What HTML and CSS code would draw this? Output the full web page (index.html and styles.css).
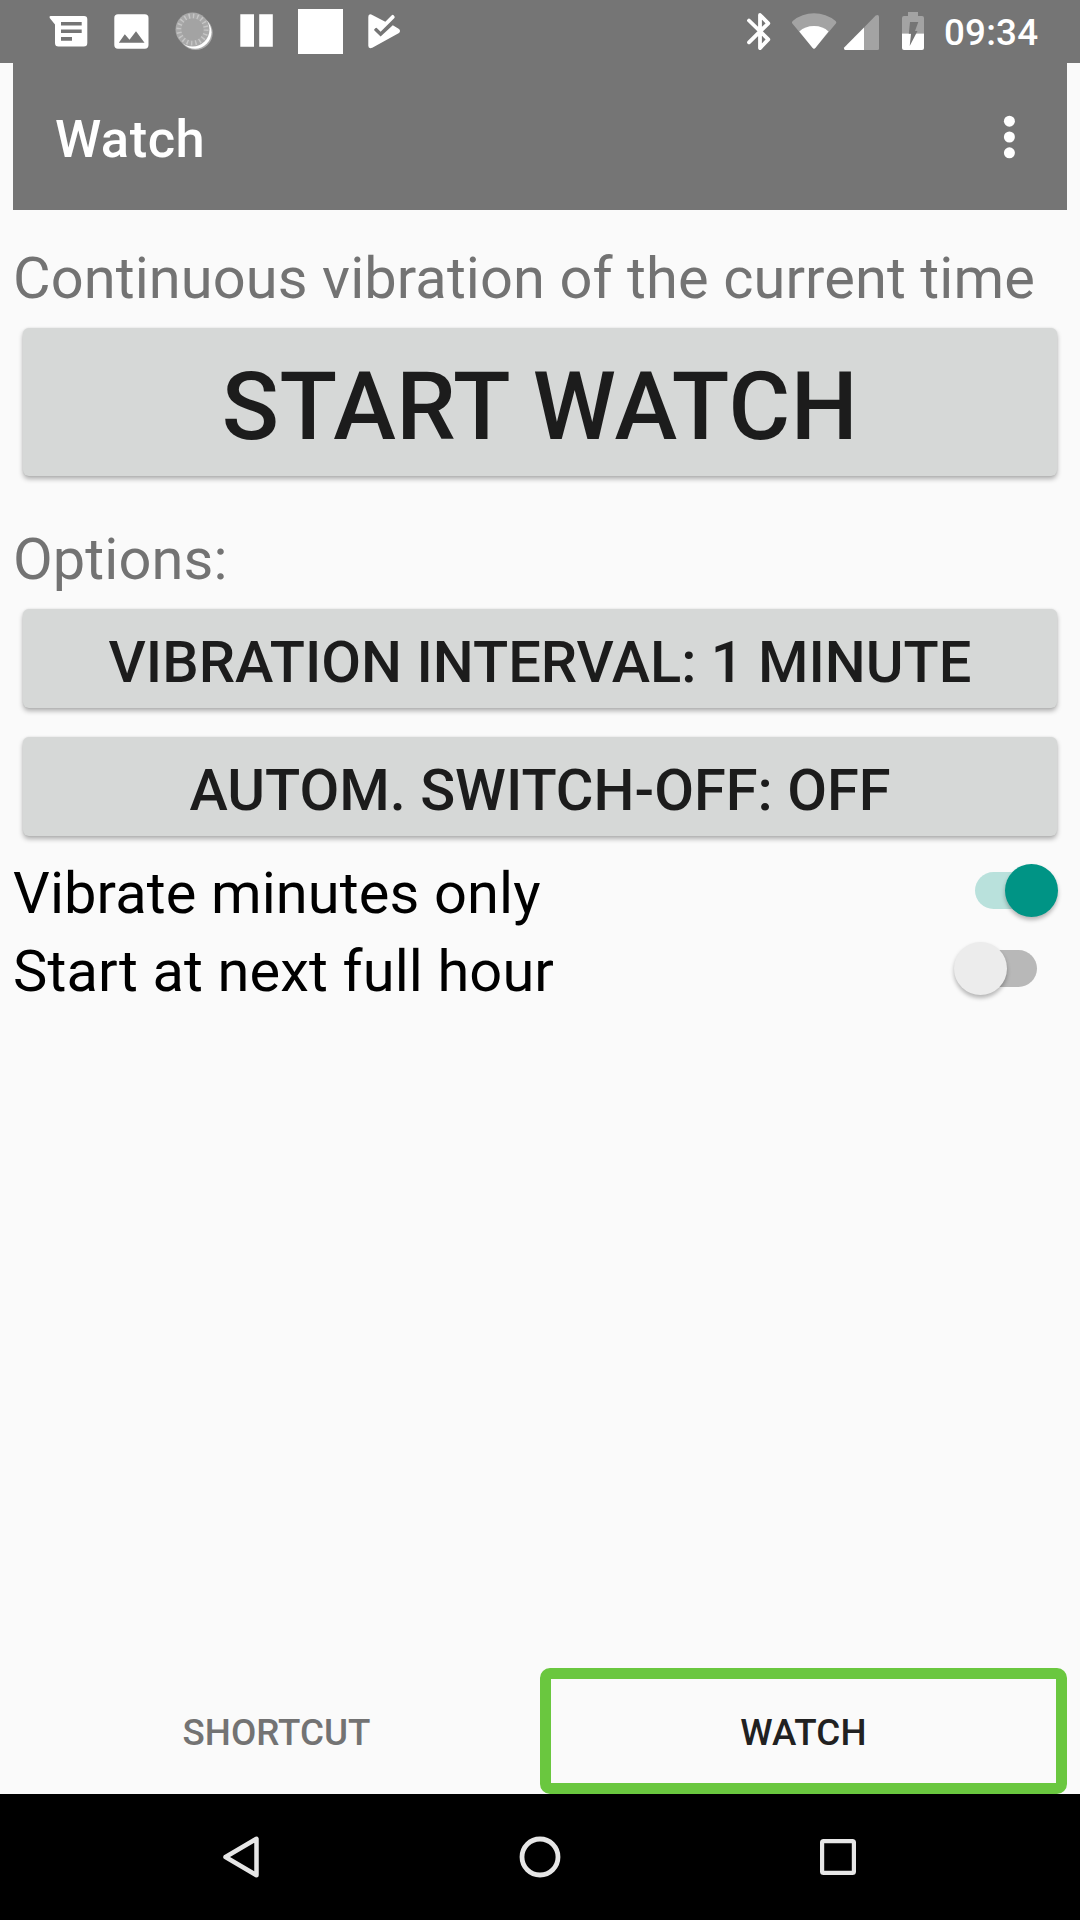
FILE: index.html
```html
<!DOCTYPE html>
<html lang="en">
<head>
<meta charset="utf-8">
<title>Watch</title>
<link rel="stylesheet" href="styles.css">
</head>
<body>
<div class="screen">
  <header class="status">
    <div class="notifications">
      <svg width="63" height="63" viewBox="37 0 63 63"><path fill="#fff" fill-rule="evenodd" d="M50.5 16H84a3.300 3.300 0 0 1 3.300 3.300V43a3.500 3.500 0 0 1-3.500 3.500H58.500A3.500 3.500 0 0 1 55 43V24.500L49.700 18Q49 16 50.500 16zM61 22v3.500h20.700V22zM61 29.500V33h20.700v-3.500zM61 37v3.700h11V37z"/></svg>
      <svg width="63" height="63" viewBox="100 0 63 63"><path fill="#fff" fill-rule="evenodd" d="M118 14.300h26.800a3.700 3.700 0 0 1 3.700 3.700v27a3.700 3.700 0 0 1-3.700 3.700H118a3.700 3.700 0 0 1-3.700-3.700V18a3.700 3.700 0 0 1 3.700-3.700zM118.800 42.800h25.700L136 31.300l-6.500 8.500-4.700-5.500z"/></svg>
      <svg width="63" height="63" viewBox="163 0 63 63"><circle cx="195.700" cy="33" r="17" fill="#aaa"/><circle cx="195" cy="32.200" r="16.500" fill="#fff"/><circle cx="192.500" cy="29.500" r="17" fill="#a9a9a9"/><circle cx="192.500" cy="29.500" r="13.500" fill="none" stroke="#c6c6c6" stroke-width="5" stroke-dasharray="1.400 2.840"/><circle cx="192.500" cy="29.500" r="11" fill="#a3a3a3"/></svg>
      <svg width="63" height="63" viewBox="226 0 63 63"><path fill="#fff" d="M240.300 14.300H254v32.400h-13.700zM259.200 14.300h13.600v32.400h-13.600z"/></svg>
      <svg width="63" height="63" viewBox="289 0 63 63"><path fill="#fff" d="M298 9h45v45h-45z"/></svg>
      <svg width="63" height="63" viewBox="352 0 63 63"><path fill="#fff" d="M368.300 17q0-3.500 3-2.500L385.300 21.800l6.500-6.500q1-1 2 .1l.6.800q.8 1-.2 2L380.600 31.700l-3.800-3.700q-.6-.6-1.200 0l-1.200 1.200q-.6.6 0 1.200l6.200 6.100 12.200-11.200 6.200 3.800q2 2 0 4L372.300 47.800q-4 1.400-4-2z"/></svg>
    </div>
    <div class="system">
      <svg width="42" height="63" viewBox="740 0 42 63"><path fill="none" stroke="#fff" stroke-width="3.800" stroke-linejoin="round" stroke-linecap="round" d="M749 20.500l19.300 18.900-8.300 8.700V15l8.300 8.300L749 42.300"/></svg>
      <svg width="58" height="63" viewBox="782 0 58 63"><path fill="#a3a3a3" d="M792.300 23.500q-1-1.500.4-2.600Q802 13.200 814 13.200t21.600 7.700q1.400 1.100.3 2.600L815.300 48q-1.300 1.500-2.600 0z"/><path fill="#fff" d="M799.300 31.500Q805 26 814 26t14.500 5.500L815.300 48q-1.300 1.500-2.600 0z"/></svg>
      <svg width="50" height="63" viewBox="840 0 50 63"><path fill="#a3a3a3" d="M864 27.500l11.700-12q3.300-1.500 3.300 1.500v31.500q0 1.500-1.500 1.500H864z"/><path fill="#fff" d="M864 27.500V50h-19q-1.700-.8-.8-2.500z"/></svg>
      <svg width="54" height="63" viewBox="890 0 54 63"><path fill="#a3a3a3" d="M902 33.500V18q0-2 2-2h4v-4h10v4h4q2 0 2 2v15.500z"/><path fill="#fff" d="M902 33.500h22V48q0 2-2 2h-18q-2 0-2-2z"/><path fill="#757575" d="M910 22h8.300l-3.300 9h2.500L909.700 46l1.300-12.200h-2.200z"/></svg>
      <span class="clock">09:34</span>
    </div>
  </header>

  <div class="appbar">
    <h1 class="title">Watch</h1>
    <svg class="overflow" width="12" height="44" viewBox="0 0 12 44"><g fill="#fff"><circle cx="6.400" cy="6.200" r="5.500"/><circle cx="6.400" cy="22" r="5.500"/><circle cx="6.400" cy="37.800" r="5.500"/></g></svg>
  </div>

  <main class="content">
    <p class="label label-first">Continuous vibration of the current time</p>
    <button class="btn btn-large">START WATCH</button>
    <p class="label">Options:</p>
    <div class="options">
      <button class="btn">VIBRATION INTERVAL: 1 MINUTE</button>
      <button class="btn">AUTOM. SWITCH-OFF: OFF</button>
    </div>
    <div class="row"><span>Vibrate minutes only</span><span class="switch on"><span class="thumb"></span></span></div>
    <div class="row"><span>Start at next full hour</span><span class="switch"><span class="thumb"></span></span></div>
  </main>

  <div class="tabs">
    <div class="tab">SHORTCUT</div>
    <div class="tab active">WATCH</div>
  </div>

  <nav class="navbar">
    <svg width="298" height="126" viewBox="0 0 298 126"><path fill="none" stroke="#e6e6e6" stroke-width="4.500" stroke-linejoin="round" d="M132.500 63l31-18.200v36.400z"/></svg>
    <svg width="298" height="126" viewBox="0 0 298 126"><circle cx="149" cy="63" r="18" fill="none" stroke="#e6e6e6" stroke-width="4.800"/></svg>
    <svg width="298" height="126" viewBox="0 0 298 126"><rect x="133.100" y="47.100" width="31.800" height="31.800" rx="1.500" fill="none" stroke="#e6e6e6" stroke-width="4.200"/></svg>
  </nav>
</div>
</body>
</html>
```
FILE: styles.css
```css
* { box-sizing: border-box; }
body {
  margin: 0;
  background: #fafafa;
  font-family: Roboto, sans-serif;
}
svg { display: block; flex: none; }
.screen {
  display: flex;
  flex-direction: column;
  width: 1080px;
  height: 1920px;
  overflow: hidden;
}
.status {
  display: flex;
  justify-content: space-between;
  height: 63px;
  padding-left: 37px;
  background: #757575;
}
.notifications, .system { display: flex; }
.system { width: 340px; }
.clock {
  color: #fff;
  font-size: 36.75px;
  font-weight: 500;
  letter-spacing: .2px;
  line-height: 66px;
  white-space: nowrap;
}
.appbar {
  display: flex;
  align-items: center;
  justify-content: space-between;
  height: 147px;
  margin: 0 13px;
  padding: 0 52px 0 42px;
  background: #757575;
}
.title {
  margin: 0;
  padding-top: 4px;
  color: #fff;
  font-size: 52.5px;
  font-weight: 500;
  letter-spacing: .5px;
  line-height: 60px;
}
.content {
  display: flex;
  flex-direction: column;
  flex: 1;
  padding: 0 13px;
}
.label {
  margin: 0;
  padding: 49px 0 16px;
  color: #737373;
  font-size: 57.75px;
  letter-spacing: .1px;
  line-height: 68px;
  white-space: nowrap;
}
.label-first { padding-top: 34px; }
.btn {
  height: 99px;
  margin: 0 10px;
  padding: 6px 0 0;
  border: 0;
  border-radius: 6px;
  background: #d6d8d7;
  box-shadow: 0 3px 5px rgba(0, 0, 0, .3), 0 0 2px rgba(0, 0, 0, .1);
  color: #1c1c1c;
  font-family: inherit;
  font-size: 57.75px;
  font-weight: 500;
  line-height: 68px;
  white-space: nowrap;
}
.btn-large {
  height: 148px;
  padding-top: 10px;
  font-size: 94.5px;
  letter-spacing: .45px;
  line-height: 110px;
}
.options {
  display: flex;
  flex-direction: column;
  gap: 29px;
  margin-bottom: 15px;
}
.row {
  display: flex;
  align-items: center;
  justify-content: space-between;
  height: 78px;
  padding-right: 30px;
  color: #000;
  font-size: 57.75px;
  letter-spacing: .12px;
  line-height: 68px;
}
.row > span:first-child { padding-top: 5px; }
.switch {
  position: relative;
  width: 62px;
  height: 37px;
  border-radius: 19px;
  background: #b8b8b8;
}
.switch.on { background: #b9e1dc; }
.thumb {
  position: absolute;
  top: -8px;
  left: -21px;
  width: 53px;
  height: 53px;
  border-radius: 50%;
  background: #ececec;
  box-shadow: 0 3px 4px rgba(0, 0, 0, .28);
}
.on .thumb { left: 30px; background: #009485; }
.tabs {
  display: grid;
  grid-template-columns: 1fr 1fr;
  height: 126px;
  padding: 0 13px;
}
.tab {
  display: flex;
  align-items: center;
  justify-content: center;
  padding-top: 2px;
  color: #737373;
  font-size: 36.75px;
  font-weight: 500;
}
.tab.active {
  border: 11px solid #6ac73f;
  border-radius: 10px;
  color: #212121;
  letter-spacing: .2px;
}
.navbar {
  display: flex;
  justify-content: center;
  height: 126px;
  background: #000;
}
```
